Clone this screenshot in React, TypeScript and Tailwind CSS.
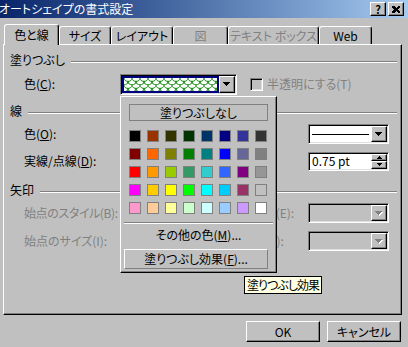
import React from 'react';

const FONT = "font-['Noto_Sans_CJK_JP','Noto_Sans_CJK_SC',sans-serif] [font-feature-settings:'palt']";
const raised = 'border border-t-white border-l-white border-r-black border-b-black shadow-[inset_-1px_-1px_0_#808080]';
const sunken = 'border border-t-[#808080] border-l-[#808080] border-r-white border-b-white shadow-[inset_1px_1px_0_#000000,inset_-1px_-1px_0_#dfdfdf]';

// Office 2000 fill palette, 8 x 5
const SWATCHES = [
    'bg-[#000000]', 'bg-[#993300]', 'bg-[#333300]', 'bg-[#003300]', 'bg-[#003366]', 'bg-[#000080]', 'bg-[#333399]', 'bg-[#333333]',
    'bg-[#800000]', 'bg-[#ff6600]', 'bg-[#808000]', 'bg-[#008000]', 'bg-[#008080]', 'bg-[#0000ff]', 'bg-[#666699]', 'bg-[#808080]',
    'bg-[#ff0000]', 'bg-[#ff9900]', 'bg-[#99cc00]', 'bg-[#339966]', 'bg-[#33cccc]', 'bg-[#3366ff]', 'bg-[#800080]', 'bg-[#969696]',
    'bg-[#ff00ff]', 'bg-[#ffcc00]', 'bg-[#ffff00]', 'bg-[#00ff00]', 'bg-[#00ffff]', 'bg-[#00ccff]', 'bg-[#993366]', 'bg-[#c0c0c0]',
    'bg-[#ff99cc]', 'bg-[#ffcc99]', 'bg-[#ffff99]', 'bg-[#ccffcc]', 'bg-[#ccffff]', 'bg-[#99ccff]', 'bg-[#cc99ff]', 'bg-[#ffffff]',
];

function DownArrow({ disabled = false }: { disabled?: boolean }) {
    const fill = disabled ? '#808080' : '#000000';
    return (
        <svg width="8" height="5" shapeRendering="crispEdges">
            {disabled && (
                <g fill="#ffffff">
                    <rect x="1" y="1" width="7" height="1" />
                    <rect x="2" y="2" width="5" height="1" />
                    <rect x="3" y="3" width="3" height="1" />
                    <rect x="4" y="4" width="1" height="1" />
                </g>
            )}
            <g fill={fill}>
                <rect x="0" y="0" width="7" height="1" />
                <rect x="1" y="1" width="5" height="1" />
                <rect x="2" y="2" width="3" height="1" />
                <rect x="3" y="3" width="1" height="1" />
            </g>
        </svg>
    );
}

function SmallArrow({ up = false }: { up?: boolean }) {
    return (
        <svg width="5" height="3" shapeRendering="crispEdges" className={up ? 'rotate-180' : ''}>
            <rect x="0" y="0" width="5" height="1" fill="#000" />
            <rect x="1" y="1" width="3" height="1" fill="#000" />
            <rect x="2" y="2" width="1" height="1" fill="#000" />
        </svg>
    );
}

function DropButton({ disabled = false }: { disabled?: boolean }) {
    return (
        <div className={`flex w-[16px] flex-none items-center justify-center bg-[#c0c0c0] ${raised}`}>
            <DownArrow disabled={disabled} />
        </div>
    );
}

function Combo({ className = '', disabled = false, children }: { className?: string; disabled?: boolean; children?: React.ReactNode }) {
    return (
        <div className={`flex h-[20px] flex-none p-[1px] ${sunken} ${disabled ? 'bg-[#c0c0c0]' : 'bg-white'} ${className}`}>
            <div className="flex flex-1 items-center">{children}</div>
            <DropButton disabled={disabled} />
        </div>
    );
}

function FillCombo() {
    return (
        <div className={`flex h-[21px] w-[117px] flex-none bg-white p-[1px] ${sunken}`}>
            <div className="flex-1 bg-[#000080] p-[2px]">
                <svg width="100%" height="100%" className="block bg-white">
                    <defs>
                        <pattern id="scales" width="8" height="7" patternUnits="userSpaceOnUse">
                            <path d="M0 0 C0 4.5 8 4.5 8 0 M-4 3.5 C-4 8 4 8 4 3.5 M4 3.5 C4 8 12 8 12 3.5" fill="none" stroke="#008000" strokeWidth="1" />
                        </pattern>
                    </defs>
                    <rect width="100%" height="100%" fill="url(#scales)" />
                </svg>
            </div>
            <DropButton />
        </div>
    );
}

function Spinner() {
    return (
        <div className={`flex h-[19px] w-[81px] flex-none bg-white p-[1px] ${sunken}`}>
            <span className="flex flex-1 items-center pl-[2px]">0.75 pt</span>
            <div className="flex w-[16px] flex-col">
                <div className={`flex flex-1 items-center justify-center bg-[#c0c0c0] ${raised}`}>
                    <SmallArrow up />
                </div>
                <div className={`flex flex-1 items-center justify-center bg-[#c0c0c0] ${raised}`}>
                    <SmallArrow />
                </div>
            </div>
        </div>
    );
}

function Section({ label }: { label: string }) {
    return (
        <div className="flex h-[20px] items-center pl-[6px] pr-[4px]">
            <span>{label}</span>
            <div className="mt-[3px] ml-[6px] h-[2px] flex-1 border-t border-b border-t-[#808080] border-b-white" />
        </div>
    );
}

function Tab({ className, active = false, disabled = false, children }: { className: string; active?: boolean; disabled?: boolean; children: React.ReactNode }) {
    return (
        <div
            className={`flex flex-none items-center justify-center rounded-t-[3px] border-t border-l border-r border-t-white border-l-white border-r-black bg-[#c0c0c0] shadow-[inset_-1px_0_0_#808080] ${
                active ? 'relative z-10 -mb-[1px] h-[21px]' : 'h-[18px]'
            } ${disabled ? 'text-[#808080]' : 'text-black'} ${className}`}
        >
            {children}
        </div>
    );
}

function Button({ children }: { children: React.ReactNode }) {
    return <div className={`flex h-[21px] w-[74px] items-center justify-center bg-[#c0c0c0] ${raised}`}>{children}</div>;
}

export default function App() {
    return (
        <div className={`relative h-[347px] w-[408px] overflow-hidden bg-[#c0c0c0] text-[12px] leading-none whitespace-nowrap text-black ${FONT}`}>
            {/* Title bar */}
            <div className="flex h-[18px] items-center justify-between bg-linear-to-r from-[#0a246a] to-[#a6caf0] pr-[4px]">
                <span className="-ml-[1px] text-white">オートシェイプの書式設定</span>
                <div className="flex gap-[2px]">
                    <div className={`flex h-[14px] w-[16px] items-center justify-center bg-[#c0c0c0] text-[11px] font-bold ${raised}`}>?</div>
                    <div className={`flex h-[14px] w-[16px] items-center justify-center bg-[#c0c0c0] ${raised}`}>
                        <svg width="8" height="7" shapeRendering="crispEdges">
                            <path d="M0 0h2l2 2l2-2h2v1l-2 2.5l2 2.5v1h-2l-2-2l-2 2h-2v-1l2-2.5l-2-2.5z" fill="#000" />
                        </svg>
                    </div>
                </div>
            </div>

            {/* Tabs */}
            <div className="flex h-[26px] items-end pl-[4px]">
                <Tab active className="w-[55px]">色と線</Tab>
                <Tab className="w-[52px]">サイズ</Tab>
                <Tab className="w-[62px]">レイアウト</Tab>
                <Tab disabled className="w-[55px]">図</Tab>
                <Tab disabled className="w-[91px]">テキスト ボックス</Tab>
                <Tab className="w-[53px]">Web</Tab>
            </div>

            {/* Tab panel */}
            <div className={`ml-[3px] flex h-[271px] w-[399px] flex-col pt-[5px] ${raised}`}>
                <Section label="塗りつぶし" />
                <div className="mt-[3px] flex h-[22px] items-center pl-[20px]">
                    <span className="w-[96px] flex-none">
                        色(<u>C</u>):
                    </span>
                    <FillCombo />
                    <div className={`ml-[13px] h-[13px] w-[13px] flex-none bg-[#c0c0c0] ${sunken}`} />
                    <span className="ml-[4px] text-[#808080]">半透明にする(T)</span>
                </div>

                <div className="mt-[6px]">
                    <Section label="線" />
                </div>
                <div className="mt-[3px] flex h-[20px] items-center pl-[20px]">
                    <span className="w-[96px] flex-none">
                        色(<u>O</u>):
                    </span>
                    <Combo className="w-[70px]" />
                    <span className="ml-[7px] w-[111px] flex-none">
                        スタイル(<u>S</u>):
                    </span>
                    <Combo className="w-[81px]">
                        <div className="mx-[2px] h-[1px] flex-1 bg-black" />
                    </Combo>
                </div>
                <div className="mt-[7px] flex h-[20px] items-center pl-[20px]">
                    <span className="w-[96px] flex-none">
                        実線/点線(<u>D</u>):
                    </span>
                    <Combo className="w-[70px]" />
                    <span className="ml-[7px] w-[111px] flex-none">
                        太さ(<u>W</u>):
                    </span>
                    <Spinner />
                </div>

                <div className="mt-[9px]">
                    <Section label="矢印" />
                </div>
                <div className="mt-[3px] flex h-[20px] items-center pl-[20px] text-[#808080]">
                    <span className="w-[96px] flex-none tracking-[-0.4px]">始点のスタイル(B):</span>
                    <Combo disabled className="w-[70px]" />
                    <span className="ml-[7px] w-[111px] flex-none">終点のスタイル(E):</span>
                    <Combo disabled className="w-[81px]" />
                </div>
                <div className="mt-[8px] flex h-[20px] items-center pl-[20px] text-[#808080]">
                    <span className="w-[96px] flex-none">始点のサイズ(I):</span>
                    <Combo disabled className="w-[70px]" />
                    <span className="ml-[7px] w-[111px] flex-none">終点のサイズ(Z):</span>
                    <Combo disabled className="w-[81px]" />
                </div>
            </div>

            {/* Dialog buttons */}
            <div className="mt-[6px] flex justify-end gap-[7px] pr-[7px]">
                <Button>OK</Button>
                <Button>キャンセル</Button>
            </div>

            {/* Colour drop-down popup */}
            <div className="absolute top-[96px] left-[120px] z-20 flex h-[177px] w-[157px] flex-col border border-t-white border-l-white border-r-black border-b-black bg-[#c0c0c0] shadow-[inset_-1px_-1px_0_#808080]">
                <div className="mt-[7px] ml-[8px] flex h-[17px] w-[139px] items-center justify-center border border-[#808080]">塗りつぶしなし</div>
                <div className="mt-[9px] ml-[8px] grid w-[138px] grid-cols-8 gap-[6px]">
                    {SWATCHES.map((c, i) => (
                        <div key={i} className={`h-[12px] w-[12px] border border-[#808080] ${c}`} />
                    ))}
                </div>
                <div className="mt-[8px] ml-[3px] h-[2px] w-[149px] border-t border-b border-t-[#808080] border-b-white" />
                <div className="mt-[1px] flex h-[20px] items-center justify-center">
                    その他の色(<u>M</u>)...
                </div>
                <div className="mt-[4px] ml-[3px] flex h-[20px] w-[144px] items-center justify-center border border-t-white border-l-white border-r-[#808080] border-b-[#808080]">
                    塗りつぶし効果(<u>F</u>)...
                </div>
            </div>

            {/* Tooltip */}
            <div className="absolute top-[276px] left-[244px] z-30 flex h-[18px] items-center border border-black bg-[#ffffe1] px-[2px] tracking-[-1px]">
                塗りつぶし効果
            </div>
        </div>
    );
}
